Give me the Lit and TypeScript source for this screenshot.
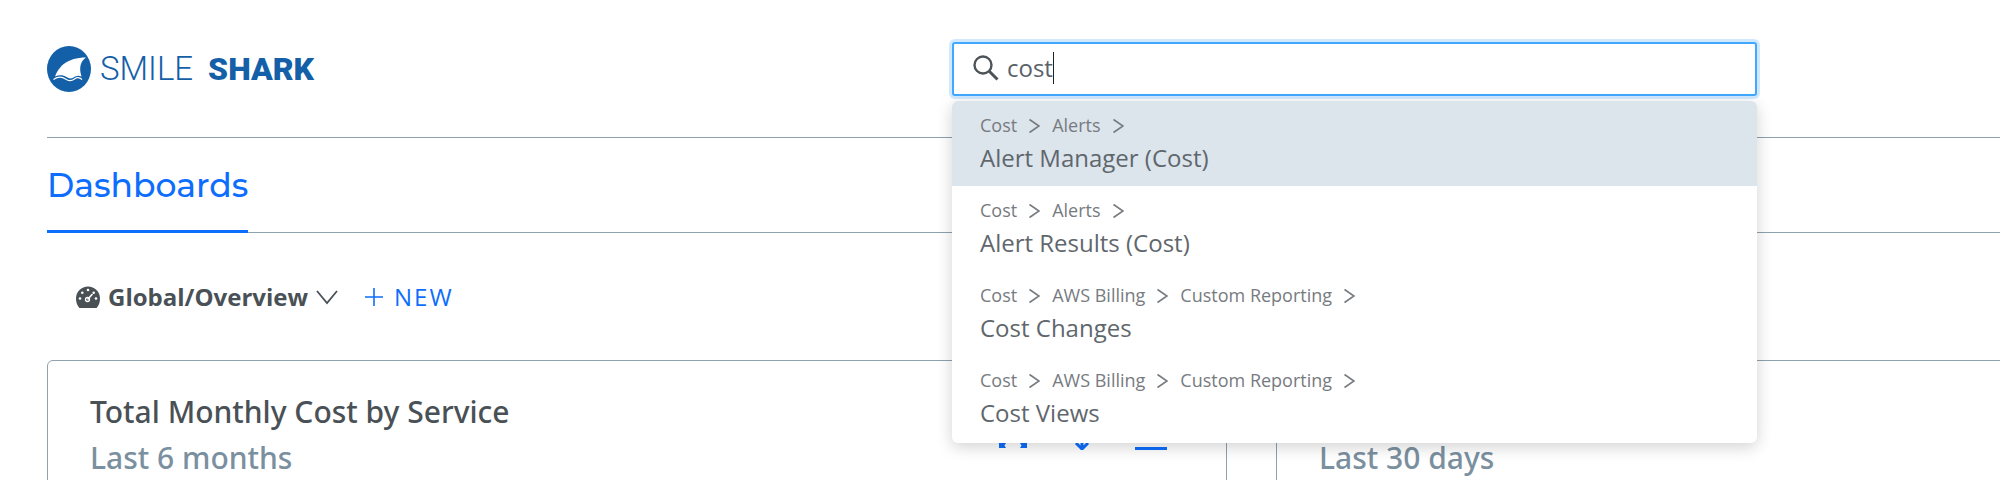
import { LitElement, html, css, svg } from "lit";
import { customElement, state } from "lit/decorators.js";
import { classMap } from "lit/directives/class-map.js";

interface Result {
  path: string[];
  name: string;
}

const RESULTS: Result[] = [
  { path: ["Cost", "Alerts"], name: "Alert Manager (Cost)" },
  { path: ["Cost", "Alerts"], name: "Alert Results (Cost)" },
  { path: ["Cost", "AWS Billing", "Custom Reporting"], name: "Cost Changes" },
  { path: ["Cost", "AWS Billing", "Custom Reporting"], name: "Cost Views" },
];

@customElement("brand-logo")
class BrandLogo extends LitElement {
  static styles = css`
    :host {
      display: block;
    }
    .brand {
      display: flex;
      align-items: center;
      gap: 9px;
      color: #1460a8;
      font: 300 33px/46px Roboto, sans-serif;
      text-decoration: none;
      white-space: nowrap;
    }
    .mark {
      flex: none;
      width: 44px;
      height: 46px;
    }
    .words {
      display: flex;
      align-items: baseline;
      gap: 15px;
    }
    .thin {
      font-weight: 300;
    }
    .heavy {
      font-size: 32px;
      font-weight: 900;
    }
  `;
  render() {
    return html`<a class="brand" href="#" aria-label="Smile Shark">
      <svg class="mark" viewBox="0 0 44 46" aria-hidden="true">
        <ellipse cx="22" cy="23" rx="22" ry="23" fill="#1460a8" />
        <path
          d="M8 30.500C12 20.500 20 11.500 39 11.500C34 15 31.500 21 34.500 30.500C31 29 29 30 26.500 31.500C24 33 22 32.500 19.500 31C16 28.800 12 29 8 30.500Z"
          fill="#fff"
        />
        <path
          d="M6.500 33.500C11 30.500 15 30.500 18.500 33C21.500 35.200 24.500 35.200 27.500 33C30 31.200 32.500 31.200 35 33.500"
          fill="none"
          stroke="#fff"
          stroke-width="1.200"
        />
      </svg>
      <span class="words"><span class="thin">SMILE</span><span class="heavy">SHARK</span></span>
    </a>`;
  }
}

@customElement("search-box")
class SearchBox extends LitElement {
  @state() query = "cost";
  @state() active = 0;

  static styles = css`
    :host {
      display: block;
      position: relative;
    }
    .field {
      display: flex;
      align-items: center;
      height: 54px;
      padding: 0 19px 2px;
      box-sizing: border-box;
      border: 2px solid #40a9ff;
      border-radius: 3px;
      background: #fff;
      box-shadow: 0 0 0 3px rgba(24, 144, 255, 0.2);
      cursor: text;
    }
    .glass {
      flex: none;
      width: 26px;
      height: 26px;
      margin-right: 8px;
    }
    .input {
      field-sizing: content;
      max-width: 100%;
      padding: 0;
      border: 0;
      outline: 0;
      background: none;
      caret-color: transparent;
      color: #5a6268;
      font: 400 24px/32px "Open Sans", sans-serif;
    }
    .caret {
      width: 1px;
      height: 32px;
      background: #222;
    }
    .menu {
      position: absolute;
      z-index: 2;
      top: 59px;
      left: 0;
      right: 0;
      margin: 0;
      padding: 0 0 2px;
      list-style: none;
      border-radius: 6px;
      overflow: hidden;
      background: #fff;
      box-shadow: 0 4px 16px rgba(0, 0, 0, 0.18);
    }
    .row {
      display: flex;
      flex-direction: column;
      height: 85px;
      padding: 12px 28px 0;
      box-sizing: border-box;
      color: #5f676d;
      text-decoration: none;
      font: 400 24px/36px "Open Sans", sans-serif;
    }
    .row.active {
      background: #dce4ec;
    }
    .path {
      display: flex;
      align-items: center;
      gap: 12px;
      color: #777b7f;
      font-size: 18px;
      line-height: 25px;
    }
    .step {
      width: 11px;
      height: 16px;
    }
    .name {
      padding-top: 2px;
    }
  `;

  render() {
    return html`
      <label class="field">
        <svg class="glass" viewBox="0 0 26 26" fill="none" stroke="#4d5356" aria-hidden="true">
          <circle cx="10" cy="10" r="8.500" stroke-width="2.400" />
          <path d="M16 16L24.500 24.500" stroke-width="3" />
        </svg>
        <input
          class="input"
          type="text"
          aria-label="Search"
          .value=${this.query}
          @input=${(e: Event) => (this.query = (e.target as HTMLInputElement).value)}
        />
        <span class="caret"></span>
      </label>
      <ul class="menu">
        ${RESULTS.map(
          (r, i) => html`<li>
            <a
              href="#"
              class=${classMap({ row: true, active: i === this.active })}
              @mouseenter=${() => (this.active = i)}
            >
              <span class="path">
                ${r.path.map(
                  (p) => html`<span>${p}</span>
                    <svg class="step" viewBox="0 0 11 16" aria-hidden="true">
                      <path d="M0.500 1.500L10 8L0.500 14.500" fill="none" stroke="#777b7f" stroke-width="1.600" />
                    </svg>`
                )}
              </span>
              <span class="name">${r.name}</span>
            </a>
          </li>`
        )}
      </ul>
    `;
  }
}

const expandIcon = svg`<path fill="#0d6efd" stroke="none" d="M2 2H9L7.500 4.500L12 9L9 12L4.500 7.500L2 9ZM30 2V9L27.500 7.500L23 12L20 9L24.500 4.500L23 2ZM30 30H23L24.500 27.500L23 25L25 22L27.500 24.500L30 22ZM2 30V22L4.500 24.500L7 22L9 25L7.500 27.500L9 30Z" />`;
const moveIcon = svg`<path d="M16 1V30M10 25L16 31L22 25M10 7L16 1L22 7" />`;
const exportIcon = svg`<path d="M16 3V20M9 13L16 20L23 13M0 30.500H32" />`;

@customElement("app-root")
class AppRoot extends LitElement {
  static styles = css`
    :host {
      display: block;
      height: 100vh;
      overflow: hidden;
      padding-left: 47px;
      box-sizing: border-box;
      background: #fff;
      color: #495156;
      font-family: "Open Sans", sans-serif;
    }
    .top {
      display: grid;
      grid-template-columns: 905fr 805fr 243fr;
      align-items: center;
      padding: 42px 0 41px;
      border-bottom: 1px solid #8da1ae;
    }
    .tabs {
      display: flex;
      border-bottom: 1px solid #8da1ae;
    }
    .tab {
      margin-bottom: -1px;
      padding: 27px 0 25px;
      border-bottom: 3px solid #0d6efd;
      color: #0d6efd;
      font: 500 33px/40px Montserrat, Inter, sans-serif;
      text-decoration: none;
    }
    .tools {
      display: flex;
      align-items: center;
      gap: 26px;
      padding: 47px 29px 46px;
    }
    .tool {
      display: flex;
      align-items: center;
      gap: 8px;
      padding: 0;
      border: 0;
      background: none;
      color: inherit;
      font: 700 24px/34px "Open Sans", sans-serif;
      cursor: pointer;
    }
    .tool.new {
      gap: 10px;
      color: #0d6efd;
      font-weight: 400;
      letter-spacing: 2px;
    }
    .gauge {
      width: 24px;
      height: 22px;
    }
    .down {
      width: 22px;
      height: 16px;
    }
    .plus {
      width: 20px;
      height: 20px;
    }
    .cards {
      display: grid;
      grid-template-columns: 1180fr 724fr;
      column-gap: 49px;
      height: 400px;
    }
    .card {
      display: flex;
      justify-content: space-between;
      align-items: start;
      padding: 28px 59px 0 42px;
      border: 1px solid #8da1ae;
      border-radius: 6px;
    }
    .card.cut {
      border-right: 0;
      border-radius: 6px 0 0 0;
    }
    .title,
    .period {
      margin: 0;
      font: 500 30px/46px "Noto Sans", sans-serif;
    }
    .title {
      min-height: 46px;
    }
    .period {
      color: #7b909f;
    }
    .actions {
      display: flex;
      gap: 37px;
      padding-top: 29px;
    }
    .action {
      padding: 0;
      border: 0;
      background: none;
      line-height: 0;
    }
    .glyph {
      width: 32px;
      height: 32px;
      fill: none;
      stroke: #0d6efd;
      stroke-width: 3;
    }
  `;

  private action(label: string, icon: unknown) {
    return html`<button class="action" aria-label=${label}>
      <svg class="glyph" viewBox="0 0 32 32" aria-hidden="true">${icon}</svg>
    </button>`;
  }

  render() {
    return html`
      <header class="top">
        <brand-logo></brand-logo>
        <search-box></search-box>
      </header>
      <nav class="tabs"><a class="tab" href="#">Dashboards</a></nav>
      <div class="tools">
        <button class="tool">
          <svg class="gauge" viewBox="0 0 24 22" aria-hidden="true">
            <path
              d="M3 21.500C1 19 0 16 0 12.500A12 12 0 0 1 24 12.500C24 16 23 19 21 21.500Q20.600 22 20 22H4Q3.400 22 3 21.500Z"
              fill="#495156"
            />
            <g fill="#fff">
              <circle cx="12" cy="4" r="1.300" />
              <circle cx="6.300" cy="6.700" r="1.300" />
              <circle cx="17.700" cy="6.700" r="1.300" />
              <circle cx="4" cy="12.500" r="1.300" />
              <circle cx="20" cy="12.500" r="1.300" />
            </g>
            <path d="M12 13L16 8.500" stroke="#fff" stroke-width="1.600" stroke-linecap="round" />
            <circle cx="11.500" cy="13.500" r="2" fill="none" stroke="#fff" stroke-width="1.300" />
          </svg>
          Global/Overview
          <svg class="down" viewBox="0 0 22 16" aria-hidden="true">
            <path d="M1 2L11 14L21 2" fill="none" stroke="#495156" stroke-width="1.800" />
          </svg>
        </button>
        <button class="tool new">
          <svg class="plus" viewBox="0 0 20 20" aria-hidden="true">
            <path d="M10 1V19M1 10H19" stroke="#0d6efd" stroke-width="1.600" />
          </svg>
          NEW
        </button>
      </div>
      <main class="cards">
        <section class="card">
          <div>
            <h2 class="title">Total Monthly Cost by Service</h2>
            <p class="period">Last 6 months</p>
          </div>
          <div class="actions">
            ${this.action("Expand", expandIcon)} ${this.action("Move", moveIcon)}
            ${this.action("Download", exportIcon)}
          </div>
        </section>
        <section class="card cut">
          <div>
            <h2 class="title"></h2>
            <p class="period">Last 30 days</p>
          </div>
        </section>
      </main>
    `;
  }
}
